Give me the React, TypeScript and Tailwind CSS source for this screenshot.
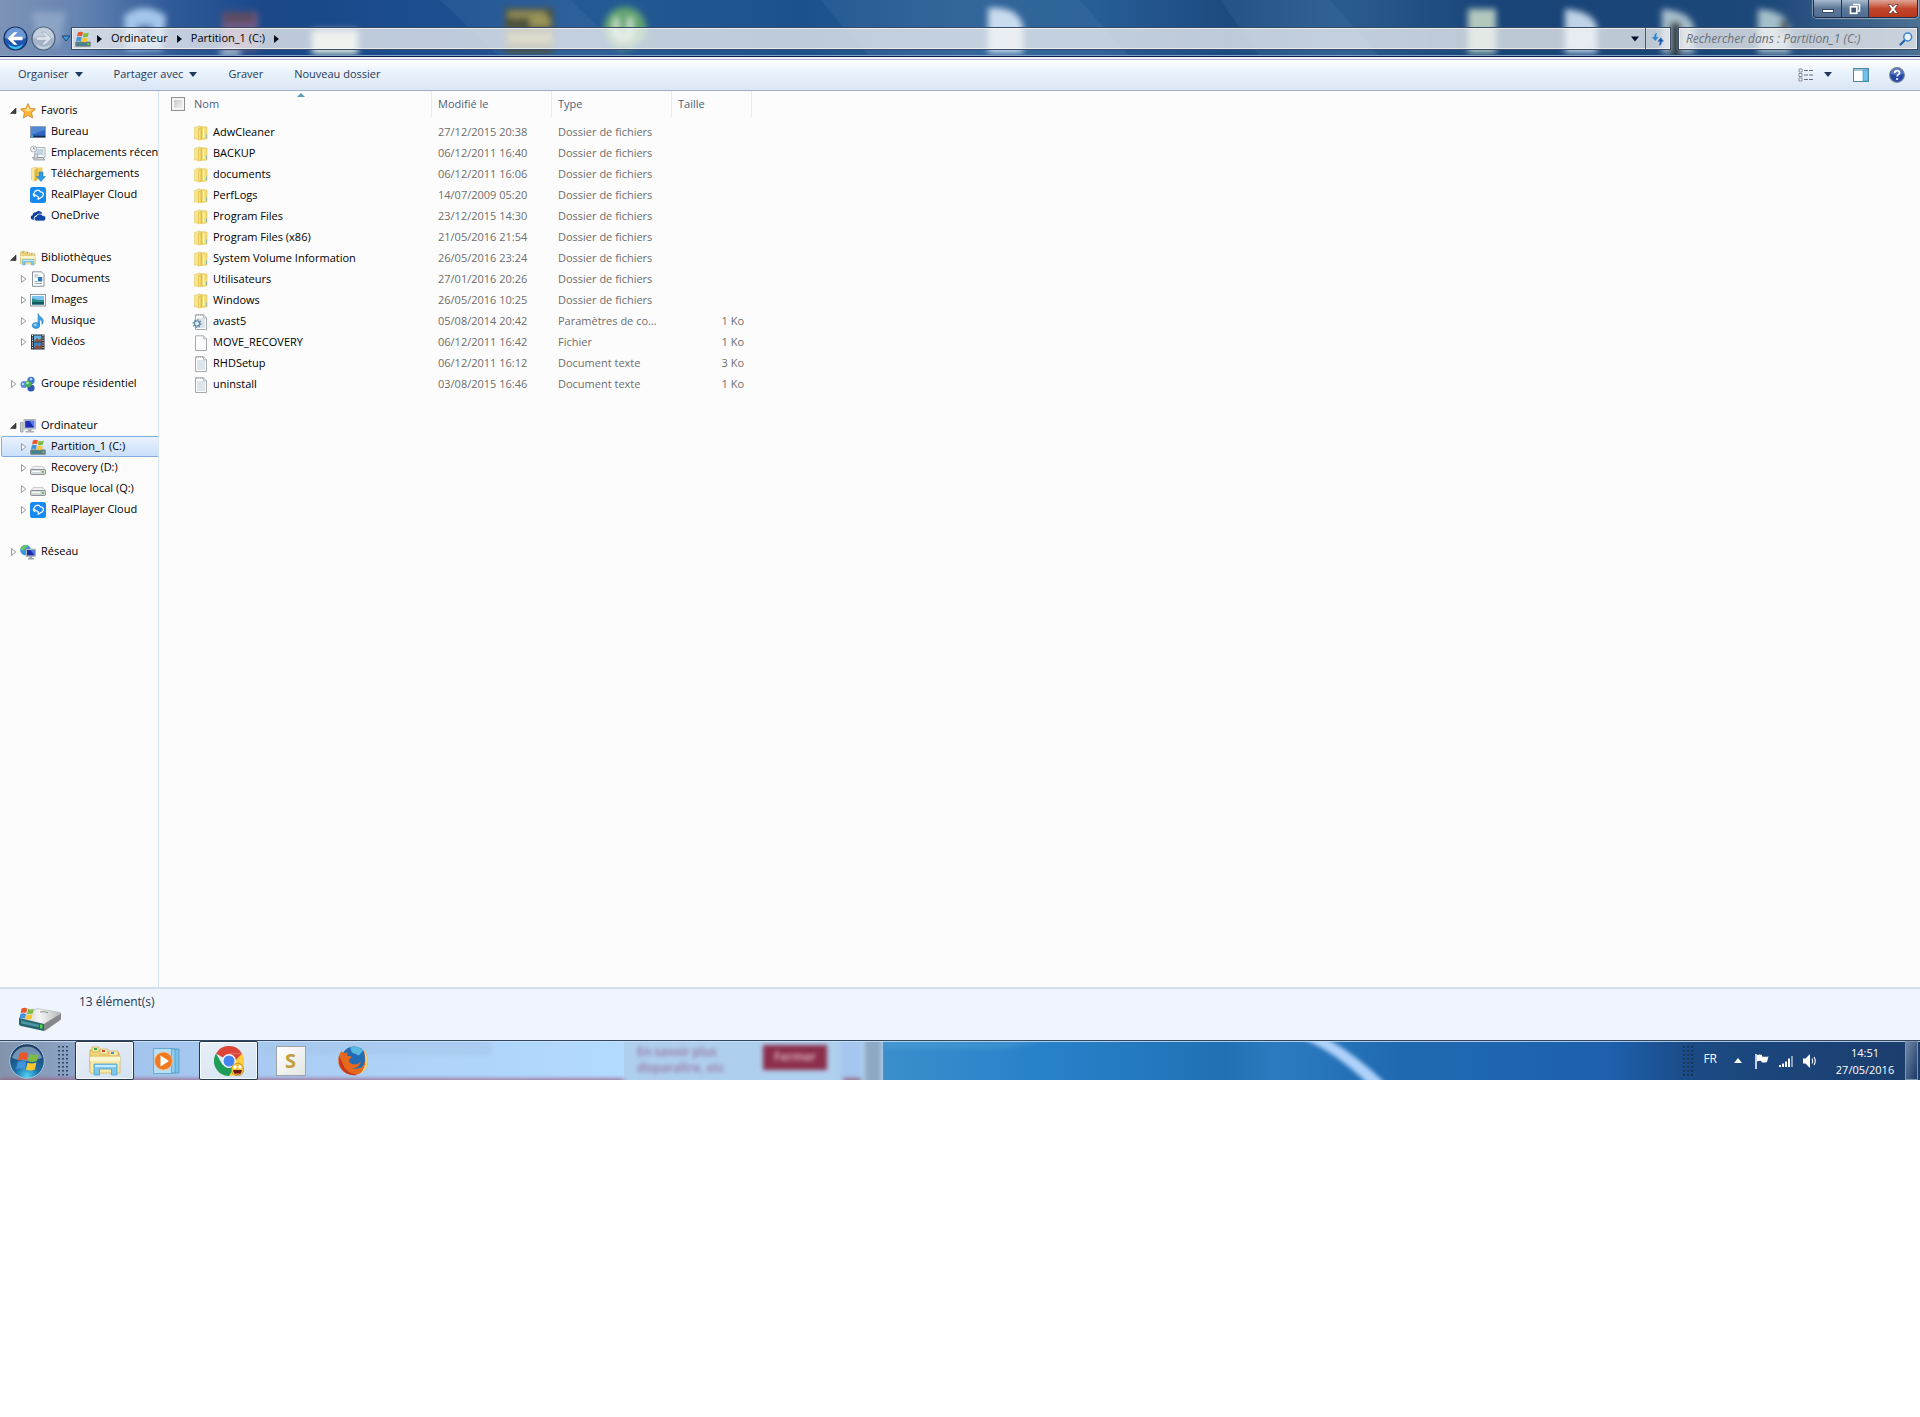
import type { ReactNode } from "react";

type IconProps = { className?: string };

function FolderIcon() {
  return (
    <svg viewBox="0 0 14 16" className="h-4 w-3.5 shrink-0">
      <path d="M.5 2.500 6 .8V14.500L.5 14z" fill="#f6e48e" stroke="#dcc35a" strokeWidth=".5" />
      <path d="M6.500 1.500 13 2V14l-6.500.5z" fill="#f3dc74" stroke="#d8bc4e" strokeWidth=".5" />
      <path d="M4.300 3.600 8 2.200V14L4.300 15.600z" fill="#e2bc3c" />
      <path d="M5 4 6.600 3.300V14.300L5 15z" fill="#f5e08a" />
      <path d="M9 3.400h1.400V13H9z" fill="#fbf0b6" />
      <path d="M12 9.500h1V13h-1z" fill="#8fb7a8" />
    </svg>
  );
}

function PageIcon({ lined, gear }: { lined?: boolean; gear?: boolean }) {
  return (
    <svg viewBox="0 0 16 16" className="-ml-0.5 h-4 w-4 shrink-0">
      <path d="M3.500.8h8l3 3v11.700h-11z" fill="#fdfdfd" stroke="#9a9fa5" strokeWidth=".9" />
      <path d="M11.500.8v3h3" fill="#e6e9ec" stroke="#9a9fa5" strokeWidth=".7" />
      {lined && <path d="M5 5h8M5 7h8M5 9h8M5 11h8M5 13h8" stroke="#b3c6d4" strokeWidth=".9" />}
      {lined && <path d="M4 1h7" stroke="#8b9298" strokeWidth="1.200" strokeDasharray="1 1" />}
      {gear && (
        <g>
          <circle cx="5" cy="9.500" r="3.900" fill="none" stroke="#7396aa" strokeWidth="1.400" strokeDasharray="1.500 1.500" />
          <circle cx="5" cy="9.500" r="2.600" fill="#e6f1f7" stroke="#5f8ba5" strokeWidth="1.400" />
        </g>
      )}
    </svg>
  );
}

function WindowsFlag() {
  return (
    <g>
      <path d="M1.200 1.600C3 .6 4.300.8 5.600 1.500L4.800 5C3.600 4.400 2.200 4.300.5 5.100z" fill="#e8562a" />
      <path d="M6.200 1.800c1.500.7 3 .6 4.500-.1L9.900 5.200c-1.500.7-3 .7-4.400.1z" fill="#7fbb42" />
      <path d="M.3 5.800c1.700-.8 3-.6 4.300 0L3.800 9.300C2.600 8.700 1.200 8.700-.4 9.400z" fill="#3f93dc" />
      <path d="M5.300 6.100c1.500.6 3 .5 4.400-.1L8.900 9.500c-1.500.7-3 .6-4.400 0z" fill="#fbc72e" />
    </g>
  );
}

function SystemDriveIcon({ className = "h-4 w-4 shrink-0" }: IconProps) {
  return (
    <svg viewBox="0 0 16 16" className={className}>
      <path d="M3.500 8h9.500l2.500 3.500H1z" fill="#d6dadd" />
      <rect x=".4" y="10.800" width="15.200" height="4.700" rx=".8" fill="#5d7c80" stroke="#868c90" strokeWidth=".6" />
      <rect x="2" y="12" width="9" height="2.200" fill="#3c8791" />
      <rect x="12.500" y="12" width="1.600" height="2" fill="#63cf4c" />
      <g transform="translate(1.500 -.4) scale(1.150)"><WindowsFlag /></g>
    </svg>
  );
}

function DriveIcon() {
  return (
    <svg viewBox="0 0 16 16" className="h-4 w-4 shrink-0">
      <path d="M3 6.500h10l2.500 3.500H.5z" fill="#eceeef" stroke="#b0b4b7" strokeWidth=".6" />
      <rect x=".5" y="9.500" width="15" height="5" rx="1.200" fill="#d3d6d8" stroke="#777c80" strokeWidth=".8" />
      <rect x="2" y="10.800" width="8" height="1.200" fill="#f7f8f8" />
      <rect x="12" y="11" width="1.600" height="1.800" fill="#57a644" />
    </svg>
  );
}

function StarIcon() {
  return (
    <svg viewBox="0 0 16 16" className="h-4 w-4 shrink-0">
      <path d="M8 .6 10.200 5.400l5.300.6-3.900 3.600 1 5.300L8 12.300l-4.600 2.600 1-5.300L.5 6l5.300-.6z" fill="#fbb638" stroke="#d9791c" strokeWidth=".8" strokeLinejoin="round" />
      <path d="M8 2.500 9.400 6.200 13 6.800 8 8.500 3.500 6.800l3-.6z" fill="#fde597" />
    </svg>
  );
}

function DesktopIcon() {
  return (
    <svg viewBox="0 0 16 16" className="h-4 w-4 shrink-0">
      <rect x=".5" y="2.500" width="15" height="11" fill="#2e66c0" stroke="#8d9cad" strokeWidth=".8" />
      <path d="M1 3h14v3L1 11z" fill="#5f97dd" opacity=".7" />
      <rect x=".8" y="11.700" width="14.400" height="1.600" fill="#1a2c4d" />
      <circle cx="2" cy="12.300" r="1.300" fill="#48b0e0" />
    </svg>
  );
}

function RecentIcon() {
  return (
    <svg viewBox="0 0 16 16" className="h-4 w-4 shrink-0">
      <path d="M5 2.500h10v10H5z" fill="#f2f4f5" stroke="#8f989e" strokeWidth=".7" />
      <path d="M6.500 5h7M6.500 7h7M6.500 9h7" stroke="#7aa7c4" strokeWidth=".8" />
      <path d="M2.500 12.500h10l2.500 2.500h-11z" fill="#cfd5d8" stroke="#848c91" strokeWidth=".7" />
      <path d="M4.500 9h3v4h-3z" fill="#dde4e8" stroke="#7d8b94" strokeWidth=".6" />
      <circle cx="3.600" cy="4" r="3" fill="#f7f9fa" stroke="#93a1aa" strokeWidth=".8" />
      <path d="M3.600 2.200V4H5" fill="none" stroke="#4a6a80" strokeWidth=".7" />
    </svg>
  );
}

function DownloadsIcon() {
  return (
    <svg viewBox="0 0 16 16" className="h-4 w-4 shrink-0">
      <path d="M1.500 2.500 6 1v13.500l-4.500-.6z" fill="#f8e8a0" stroke="#d9bd5c" strokeWidth=".5" />
      <path d="M6 1.500h6.500V13H6z" fill="#f0cf62" />
      <path d="M4.500 3.800 7.500 2.500V14l-3 1.500z" fill="#dfb437" />
      <path d="M9 6h4v4.500h2.500L11 15.500 6.500 10.500H9z" fill="#2f9be2" stroke="#1c74b8" strokeWidth=".5" />
    </svg>
  );
}

function RealPlayerIcon() {
  return (
    <svg viewBox="0 0 16 16" className="h-4 w-4 shrink-0">
      <rect width="16" height="16" rx="2.500" fill="#168af0" />
      <path d="M4.800 9.500A2 2 0 0 1 4.200 6 3.400 3.400 0 0 1 10.400 4.800 2.800 2.800 0 0 1 12.300 9.800L8.200 12.300V9.800L4.500 7.800" fill="none" stroke="#fff" strokeWidth="1.300" strokeLinejoin="round" strokeLinecap="round" />
    </svg>
  );
}

function OneDriveIcon() {
  return (
    <svg viewBox="0 0 16 16" className="h-4 w-4 shrink-0">
      <path d="M3.800 11.800H2.600A2.300 2.300 0 0 1 2.500 7.300 3.600 3.600 0 0 1 6 4.300 4 4 0 0 1 12.500 5.500L8 6.200 4.500 8.500z" fill="#0d3f9a" />
      <path d="M6.500 13a2.300 2.300 0 0 1-.2-4.600A3.400 3.400 0 0 1 12.500 7.500 2.800 2.800 0 0 1 13.600 13z" fill="#0f47a8" stroke="#fcfcfc" strokeWidth=".7" />
    </svg>
  );
}

function LibrariesIcon({ className = "h-4 w-4 shrink-0" }: IconProps) {
  return (
    <svg viewBox="0 0 32 30" className={className}>
      <path d="M1 4h9l2 3h18v19H1z" fill="#f3d878" stroke="#c9a649" strokeWidth=".8" />
      <path d="M3 1h7v5H3z" fill="#f7e49a" stroke="#c9a649" strokeWidth=".6" />
      <path d="M5 2h3v2H5z" fill="#39a845" />
      <path d="M11 3h8v5h-8z" fill="#f9e8a8" stroke="#c9a649" strokeWidth=".6" />
      <path d="M13 4h3v2h-3z" fill="#cf4a36" />
      <path d="M20 5h9v5h-9z" fill="#f9e8a8" stroke="#c9a649" strokeWidth=".6" />
      <path d="M22 6h3v2h-3z" fill="#3f8fd8" />
      <path d="M1 10h30v17H1z" fill="#f8e9a7" stroke="#d4b65c" strokeWidth=".8" />
      <path d="M1 11h30v4H1z" fill="#fcf5cf" />
      <path d="M5 18h23v11h-5.500v-6h-12v6H5z" fill="#7cc6ec" stroke="#4a9fd0" strokeWidth=".8" />
      <path d="M6 19h21v2H6z" fill="#cbeafa" />
    </svg>
  );
}

function DocumentsIcon() {
  return (
    <svg viewBox="0 0 16 16" className="h-4 w-4 shrink-0">
      <path d="M2.500.8h9l2.500 2.500v12h-11.500z" fill="#fcfdfd" stroke="#7d8790" strokeWidth=".9" />
      <path d="M4.500 4h4M4.500 6h3M4.500 12.500h7.500M4.500 10.500h3" stroke="#8fa2b3" strokeWidth=".9" />
      <rect x="8" y="6" width="4.200" height="4.500" fill="#2b76b8" />
    </svg>
  );
}

function PicturesIcon() {
  return (
    <svg viewBox="0 0 16 16" className="h-4 w-4 shrink-0">
      <rect x=".5" y="2.500" width="15" height="11.500" fill="#fbfbfb" stroke="#868e94" strokeWidth=".9" />
      <rect x="2" y="4" width="12" height="8.500" fill="#7cc4ee" />
      <path d="M2 6.500c4 .5 5 2 12 1.500v4.500H2z" fill="#2a8f87" />
      <path d="M2 10h12v2.500H2z" fill="#165a66" />
    </svg>
  );
}

function MusicIcon() {
  return (
    <svg viewBox="0 0 16 16" className="h-4 w-4 shrink-0">
      <path d="M8 .5c.5 3 5.500 3.500 5.300 8-.1 1.500-.8 2.500-1.500 3 .8-3-.8-4.500-2.300-5v6H8z" fill="#3fa3e3" stroke="#1d79bd" strokeWidth=".5" />
      <ellipse cx="6" cy="12.500" rx="3.700" ry="2.900" fill="#3da5e8" stroke="#1a6db0" strokeWidth=".6" />
      <ellipse cx="5.200" cy="11.700" rx="1.500" ry="1" fill="#a9dcf8" />
    </svg>
  );
}

function VideosIcon() {
  return (
    <svg viewBox="0 0 16 16" className="h-4 w-4 shrink-0">
      <rect x="1" y=".5" width="13.500" height="15" fill="#232a30" />
      <rect x="4" y="1.500" width="7.500" height="6" fill="#5fb0e6" />
      <rect x="4" y="8.500" width="7.500" height="6" fill="#3c88c6" />
      <path d="M4 7.500 7 4l2 2 2.500-2v3.500zM4 14.500l3-4 2 2 2.500-2v4z" fill="#9a4b32" />
      <path d="M2.500 1v14M13 1v14" stroke="#e4e8ea" strokeWidth="1.200" strokeDasharray="1.200 1.200" />
    </svg>
  );
}

function HomegroupIcon() {
  return (
    <svg viewBox="0 0 16 16" className="h-4 w-4 shrink-0">
      <circle cx="4" cy="8.500" r="3.500" fill="#5a8fd6" />
      <circle cx="11" cy="4.500" r="3.700" fill="#4079cc" />
      <circle cx="11" cy="12" r="3.600" fill="#2e58b4" />
      <circle cx="8.200" cy="8" r="3.300" fill="#45ac55" />
      <circle cx="7.500" cy="7" r="1.300" fill="#b5e6b2" />
      <circle cx="11" cy="3.300" r="1.200" fill="#bcd7f6" />
      <circle cx="3" cy="8" r="1" fill="#d3e5f9" />
    </svg>
  );
}

function ComputerIcon() {
  return (
    <svg viewBox="0 0 16 16" className="h-4 w-4 shrink-0">
      <path d="M.5 4.500H3V14H.5z" fill="#c9cfd2" stroke="#7b8388" strokeWidth=".6" />
      <rect x="4" y="1.500" width="11.500" height="9.500" fill="#d7dbde" stroke="#8b9297" strokeWidth=".6" />
      <rect x="5.200" y="2.700" width="9" height="7" fill="#1c2fb4" />
      <path d="M9.500 2.700h4.700v7z" fill="#5c7df0" />
      <path d="M8 11h3.500v2H14v1.500H5.500V13H8z" fill="#aab0b4" />
    </svg>
  );
}

function NetworkIcon() {
  return (
    <svg viewBox="0 0 16 16" className="h-4 w-4 shrink-0">
      <circle cx="5.500" cy="6" r="5.300" fill="#3a95dd" />
      <path d="M2 2.500C5 0 7 1 7.500 2 6 4 5 3.500 4.500 6 3.500 7 1.500 6 .5 5z" fill="#69c562" />
      <rect x="6" y="5" width="9.500" height="7.500" fill="#c8cdd1" stroke="#7f878d" strokeWidth=".5" />
      <rect x="7" y="6" width="7.500" height="5.500" fill="#1a2db0" />
      <path d="M10.500 6h4v5.500z" fill="#4f74ea" />
      <path d="M9.500 12.500h2.500V14H14v1.500H8V14h1.500z" fill="#9ba2a7" />
    </svg>
  );
}

type TreeItem = { label: string; icon: ReactNode; selected?: boolean };
type TreeGroup = TreeItem & { open?: boolean; leaf?: boolean; items: TreeItem[] };

const groups: TreeGroup[] = [
  {
    label: "Favoris",
    icon: <StarIcon />,
    open: true,
    leaf: true,
    items: [
      { label: "Bureau", icon: <DesktopIcon /> },
      { label: "Emplacements récents", icon: <RecentIcon /> },
      { label: "Téléchargements", icon: <DownloadsIcon /> },
      { label: "RealPlayer Cloud", icon: <RealPlayerIcon /> },
      { label: "OneDrive", icon: <OneDriveIcon /> },
    ],
  },
  {
    label: "Bibliothèques",
    icon: <LibrariesIcon />,
    open: true,
    items: [
      { label: "Documents", icon: <DocumentsIcon /> },
      { label: "Images", icon: <PicturesIcon /> },
      { label: "Musique", icon: <MusicIcon /> },
      { label: "Vidéos", icon: <VideosIcon /> },
    ],
  },
  { label: "Groupe résidentiel", icon: <HomegroupIcon />, items: [] },
  {
    label: "Ordinateur",
    icon: <ComputerIcon />,
    open: true,
    items: [
      { label: "Partition_1 (C:)", icon: <SystemDriveIcon />, selected: true },
      { label: "Recovery (D:)", icon: <DriveIcon /> },
      { label: "Disque local (Q:)", icon: <DriveIcon /> },
      { label: "RealPlayer Cloud", icon: <RealPlayerIcon /> },
    ],
  },
  { label: "Réseau", icon: <NetworkIcon />, items: [] },
];

const files = [
  { name: "AdwCleaner", date: "27/12/2015 20:38", type: "Dossier de fichiers", size: "", kind: "folder" },
  { name: "BACKUP", date: "06/12/2011 16:40", type: "Dossier de fichiers", size: "", kind: "folder" },
  { name: "documents", date: "06/12/2011 16:06", type: "Dossier de fichiers", size: "", kind: "folder" },
  { name: "PerfLogs", date: "14/07/2009 05:20", type: "Dossier de fichiers", size: "", kind: "folder" },
  { name: "Program Files", date: "23/12/2015 14:30", type: "Dossier de fichiers", size: "", kind: "folder" },
  { name: "Program Files (x86)", date: "21/05/2016 21:54", type: "Dossier de fichiers", size: "", kind: "folder" },
  { name: "System Volume Information", date: "26/05/2016 23:24", type: "Dossier de fichiers", size: "", kind: "folder" },
  { name: "Utilisateurs", date: "27/01/2016 20:26", type: "Dossier de fichiers", size: "", kind: "folder" },
  { name: "Windows", date: "26/05/2016 10:25", type: "Dossier de fichiers", size: "", kind: "folder" },
  { name: "avast5", date: "05/08/2014 20:42", type: "Paramètres de co...", size: "1 Ko", kind: "config" },
  { name: "MOVE_RECOVERY", date: "06/12/2011 16:42", type: "Fichier", size: "1 Ko", kind: "blank" },
  { name: "RHDSetup", date: "06/12/2011 16:12", type: "Document texte", size: "3 Ko", kind: "text" },
  { name: "uninstall", date: "03/08/2015 16:46", type: "Document texte", size: "1 Ko", kind: "text" },
];

// Desktop seen through the glass title bar
function TitleWallpaper() {
  return (
    <svg viewBox="0 0 1920 56" preserveAspectRatio="none" className="absolute inset-0 h-full w-full">
      <defs>
        <linearGradient id="title-sky">
          <stop offset="0" stopColor="#7d93b6" />
          <stop offset=".04" stopColor="#6685b2" />
          <stop offset=".09" stopColor="#2f5a98" />
          <stop offset=".14" stopColor="#194788" />
          <stop offset=".24" stopColor="#1d4f90" />
          <stop offset=".3" stopColor="#265a94" />
          <stop offset=".42" stopColor="#1d518b" />
          <stop offset=".5" stopColor="#2c6096" />
          <stop offset=".57" stopColor="#285d95" />
          <stop offset=".64" stopColor="#1b4a80" />
          <stop offset=".7" stopColor="#2a5b90" />
          <stop offset=".78" stopColor="#184478" />
          <stop offset=".92" stopColor="#1c4779" />
          <stop offset="1" stopColor="#4d7093" />
        </linearGradient>
        <filter id="title-blur" x="-20%" y="-20%" width="140%" height="140%">
          <feGaussianBlur stdDeviation="3" />
        </filter>
      </defs>
      <rect width="1920" height="56" fill="url(#title-sky)" />
      <path d="M440 0h130l60 57H500zM820 0h260l50 57H870zM1220 0h110l50 57h-120z" fill="#5b8cbd" opacity=".15" />
      <g filter="url(#title-blur)">
        <path d="M32 12h34l-6 34H38z" fill="#9fb6d2" opacity=".6" />
        <path d="M124 16q20-16 42 0l-4 34h-36z" fill="#a5c6ea" />
        <path d="M137 25h16v11h-16z" fill="#3c6db0" />
        <path d="M222 12h36v38h-36z" fill="#6f5a86" />
        <path d="M224 13h30v9h-30z" fill="#5c4a58" />
        <path d="M220 50h20v6h-20z" fill="#a9c3dc" />
        <path d="M312 30h46v24h-46z" fill="#dce9dd" />
        <path d="M505 8h48v45h-48z" fill="#4d523c" />
        <path d="M508 12h38v5h-38zM530 18h20v8h-20zM508 34h44v8h-44z" fill="#a29a5c" />
        <circle cx="625" cy="28" r="21" fill="#63a56f" />
        <path d="M616 18v16q8 8 14 0V18" fill="none" stroke="#d5ead8" strokeWidth="5" />
        <path d="M988 8q30-2 35 18v27h-35z" fill="#c9dcef" />
        <path d="M1468 9h28v44h-28z" fill="#b3c8bd" />
        <path d="M1565 9q28 2 32 18v26h-32z" fill="#bfd3e6" />
        <path d="M1662 9q28 2 32 18v26h-32z" fill="#a9c0cc" />
        <path d="M1670 22h11v34h-11z" fill="#2f3639" />
        <path d="M1758 9q28 2 32 18v26h-32z" fill="#a6c0cb" />
        <path d="M1780 20h8v14h-8z" fill="#44525c" />
      </g>
      <rect y="55" width="1920" height="1" fill="#86a5c5" />
    </svg>
  );
}

function TaskbarWallpaper() {
  return (
    <svg viewBox="0 0 1920 39" preserveAspectRatio="none" className="absolute inset-0 h-full w-full">
      <defs>
        <linearGradient id="task-left">
          <stop offset="0" stopColor="#8293ac" />
          <stop offset=".12" stopColor="#8ba4c6" />
          <stop offset=".22" stopColor="#a3c4ec" />
          <stop offset=".6" stopColor="#aed1f8" />
          <stop offset="1" stopColor="#b3daff" />
        </linearGradient>
        <linearGradient id="task-right">
          <stop offset="0" stopColor="#3a8ecc" />
          <stop offset=".16" stopColor="#2781c9" />
          <stop offset=".33" stopColor="#2071b4" />
          <stop offset=".38" stopColor="#2c7bc0" />
          <stop offset=".5" stopColor="#1f69b0" />
          <stop offset=".7" stopColor="#1d60ad" />
          <stop offset=".78" stopColor="#1b4a84" />
          <stop offset="1" stopColor="#1b3d6c" />
        </linearGradient>
        <filter id="task-blur" x="-20%" y="-40%" width="140%" height="180%">
          <feGaussianBlur stdDeviation="2" />
        </filter>
      </defs>
      <rect width="625" height="39" fill="url(#task-left)" />
      <rect x="624" width="260" height="39" fill="#afcfee" />
      <rect x="883" width="1037" height="39" fill="url(#task-right)" />
      <g filter="url(#task-blur)">
        <rect x="260" y="-4" width="232" height="18" fill="#a5c6ea" opacity=".6" />
        <rect x="841" y="-4" width="20" height="50" fill="#a4c6ef" />
        <rect x="865" y="-4" width="16" height="50" fill="#8ea9c4" />
        <rect x="763" y="4" width="64" height="25" fill="#8b2e4c" />
        <rect x="0" y="38" width="624" height="4" fill="#9a5878" />
        <rect x="843" y="37" width="18" height="4" fill="#94405f" />
        <path d="M1302-3h24q32 18 60 46h-18q-30-30-66-46z" fill="#aed2fa" />
        <path d="M883 0h160l-40 8H883z" fill="#5eacdc" opacity=".3" />
      </g>
      <g filter="url(#task-blur)" fontFamily="Open Sans, sans-serif" fontWeight="600" fontSize="12" fill="#94709c">
        <text x="637" y="15">En savoir plus</text>
        <text x="637" y="31">disparaître, etc</text>
        <text x="774" y="20" fill="#e0bccb">Fermer</text>
      </g>
      <rect width="1920" height="1" fill="#cfe4f5" opacity=".8" />
    </svg>
  );
}

function Caret({ className = "h-1.5 w-2" }: IconProps) {
  return (
    <svg viewBox="0 0 8 5" className={className}>
      <path d="M0 0h8L4 5z" fill="currentColor" />
    </svg>
  );
}

function Chevron() {
  return (
    <svg viewBox="0 0 5 8" className="h-2 w-[5px]">
      <path d="M0 0v8l5-4z" fill="#0b0f1a" />
    </svg>
  );
}

function NavButton({ back }: { back?: boolean }) {
  return (
    <button aria-label={back ? "Précédent" : "Suivant"} className="h-[25px] w-[25px]">
      <svg viewBox="0 0 25 25" className="h-full w-full">
        <circle cx="12.500" cy="12.500" r="11.500" fill={back ? "#1d56ae" : "#a4b3c7"} stroke={back ? "#16305c" : "#4c5f7a"} strokeWidth="1.200" />
        <path d="M2 12a10.500 10.500 0 0 1 21 0q-10 4-21 0z" fill={back ? "#7fa9de" : "#ccd6e2"} opacity=".8" />
        <path d="M5 18q7.500 6 15 0-2 5-7.500 5.300Q7 23 5 18z" fill={back ? "#38c1f4" : "#c6d1df"} />
        {back ? (
          <path d="M4.500 12.500 11 6.200h3.500l-4.300 4.500h9.300v3.600h-9.300l4.300 4.500H11z" fill="#fff" />
        ) : (
          <path d="M20.500 12.500 14 6.200h-3.500l4.300 4.500H5.500v3.600h9.300l-4.300 4.500H14z" fill="#dde4ec" stroke="#94a4b8" strokeWidth=".6" />
        )}
      </svg>
    </button>
  );
}

function TitleBar() {
  return (
    <header className="relative h-[57px] overflow-hidden border-b border-[#101f45]">
      <TitleWallpaper />
      <div className="relative flex justify-end pr-0.5">
        <div className="flex h-[18px] overflow-hidden rounded-b border border-t-0 border-[#1d2c44] shadow-[0_0_1px_1px_rgba(255,255,255,0.45)]">
          <button aria-label="Réduire" className="flex w-7 items-end justify-center border-r border-[#22344f] bg-linear-to-b from-[#a9bacd] via-[#5d7899] to-[#506d92] pb-1">
            <span className="h-1 w-3 border border-[#39485e] bg-white" />
          </button>
          <button aria-label="Niveau inférieur" className="flex w-[27px] items-center justify-center border-r border-[#22344f] bg-linear-to-b from-[#a9bacd] via-[#5d7899] to-[#506d92]">
            <svg viewBox="0 0 12 12" className="h-3 w-3">
              <path d="M4 1.500h6.500V8H8.500" fill="none" stroke="#fff" strokeWidth="1.500" />
              <rect x="1.500" y="3.800" width="6.300" height="6.500" fill="#405673" stroke="#fff" strokeWidth="1.700" />
            </svg>
          </button>
          <button aria-label="Fermer" className="flex w-12 items-center justify-center bg-linear-to-b from-[#dfa596] via-[#c1462b] to-[#b8371a]">
            <svg viewBox="0 0 12 10" className="h-2.5 w-3">
              <path d="M1 .5h3l2 2.500L8 .5h3L7.700 5 11 9.500H8L6 7 4 9.500H1L4.300 5z" fill="#fff" stroke="#5d2d2a" strokeWidth=".7" />
            </svg>
          </button>
        </div>
      </div>
      <div className="relative mt-2 flex items-center pr-0.5 pl-[3px]">
        <div className="flex w-[68px] items-center gap-[3px]">
          <NavButton back />
          <NavButton />
          <button aria-label="Pages récentes" className="pl-0.5 text-[#3fa0dd]">
            <svg viewBox="0 0 10 7" className="h-[7px] w-2.5">
              <path d="M1 1h8L5 6z" fill="#3fa0dd" stroke="#173b6e" strokeWidth=".9" />
            </svg>
          </button>
        </div>
        <div className="flex h-[23px] flex-1 items-center border border-[#3a4c63] bg-[#f4f4f4]/75 pl-[3px] shadow-[inset_0_0_0_1px_rgba(255,255,255,0.6)]">
          <SystemDriveIcon className="h-4 w-4" />
          <div className="flex items-center gap-[9px] pl-[6px] text-black">
            <Chevron />
            <button>Ordinateur</button>
            <Chevron />
            <button>Partition_1 (C:)</button>
            <Chevron />
          </div>
          <button aria-label="Emplacements précédents" className="ml-auto pr-1.5 text-[#050a30]">
            <Caret />
          </button>
          <button aria-label="Actualiser" className="flex h-full w-[25px] items-center justify-center border-l border-[#4a5a70]">
            <svg viewBox="0 0 14 14" className="h-3.5 w-3.5">
              <path d="M6.500 1C4 1 3.200 2.500 3.200 5H1l3.300 4L7.500 5H5.300c0-2 .2-3 1.200-4z" fill="#2f86d0" />
              <path d="M7.500 13.500c2.500 0 3.300-1.500 3.300-4H13L9.700 5.500 6.500 9.500h2.200c0 2-.2 3-1.200 4z" fill="#1b5fb0" />
            </svg>
          </button>
        </div>
        <label className="ml-[7px] flex h-[23px] w-60 items-center border border-[#3a4c63] bg-[#f4f4f4]/75 pr-1 pl-[7px] shadow-[inset_0_0_0_1px_rgba(255,255,255,0.6)]">
          <input
            type="text"
            aria-label="Rechercher"
            placeholder="Rechercher dans : Partition_1 (C:)"
            className="min-w-0 flex-1 bg-transparent text-xs italic outline-none placeholder:text-[#6b7078]"
          />
          <svg viewBox="0 0 14 14" className="h-3.5 w-3.5">
            <path d="M6 8 1.500 12.500" stroke="#1e5fae" strokeWidth="2.200" strokeLinecap="round" />
            <circle cx="8.700" cy="5" r="3.900" fill="#eaf4fc" stroke="#3f83cb" strokeWidth="1.500" />
          </svg>
        </label>
      </div>
    </header>
  );
}

function Toolbar() {
  return (
    <div className="flex h-[34px] items-center border-t-2 border-b border-t-[#f1f1fb] border-b-[#9dafc9] bg-linear-to-b from-white via-[#e9f2fb] via-45% to-[#dae6f4] pr-[15px] pl-[18px] text-[#1e395b] shadow-[inset_0_1px_0_#b3b1cf]">
      <button className="flex items-center gap-1.5">Organiser <Caret className="h-[5px] w-2" /></button>
      <button className="ml-[31px] flex items-center gap-1.5">Partager avec <Caret className="h-[5px] w-2" /></button>
      <button className="ml-[31px]">Graver</button>
      <button className="ml-[31px]">Nouveau dossier</button>
      <button aria-label="Changer l'affichage" className="ml-auto">
        <svg viewBox="0 0 16 14" className="h-3.5 w-4">
          <path d="M1 1h3v3H1zM1 5.500h3v3H1zM1 10h3v3H1z" fill="#fff" stroke="#76828f" strokeWidth=".9" />
          <path d="M6 2.500h4M11 2.500h4M6 7h4M11 7h4M6 11.500h4M11 11.500h4" stroke="#5c7084" strokeWidth="1" />
        </svg>
      </button>
      <button aria-label="Autres options" className="ml-[10px]"><Caret className="h-[5px] w-2" /></button>
      <button aria-label="Volet de visualisation" className="ml-[21px]">
        <svg viewBox="0 0 16 14" className="h-3.5 w-4">
          <rect x=".5" y=".5" width="15" height="13" fill="#fff" stroke="#4d85a6" />
          <path d="M1 1h14v2H1z" fill="#a3c6da" />
          <rect x="10" y="2" width="5" height="11" fill="#6fc3e6" stroke="#4d97bd" strokeWidth=".7" />
        </svg>
      </button>
      <button aria-label="Aide" className="ml-5">
        <svg viewBox="0 0 16 16" className="h-4 w-4">
          <circle cx="8" cy="8" r="7.400" fill="#2549a8" stroke="#7c8695" strokeWidth="1.100" />
          <path d="M2 7a6 6 0 0 1 12 0q-6 2-12 0z" fill="#7f9be0" opacity=".6" />
          <path d="M5.600 6q.2-2.400 2.500-2.400 2.400 0 2.400 2.100 0 1.300-1.300 2-1 .6-1 1.700" fill="none" stroke="#fff" strokeWidth="1.700" />
          <circle cx="8.100" cy="12" r="1.100" fill="#fff" />
        </svg>
      </button>
    </div>
  );
}

function Expander({ open }: { open?: boolean }) {
  return (
    <svg viewBox="0 0 7 8" className="h-2 w-[7px] shrink-0">
      {open ? (
        <path d="M6 1v5.500H.5z" fill="#404040" stroke="#262626" strokeWidth=".6" />
      ) : (
        <path d="M1.500.6v6.800L5.800 4z" fill="#fff" stroke="#8c8c8c" strokeWidth=".9" />
      )}
    </svg>
  );
}

function Sidebar() {
  return (
    <nav aria-label="Volet de navigation" className="w-[159px] shrink-0 overflow-hidden border-r border-[#d6e5f5] pt-[9px] text-black">
      {groups.map((group) => (
        <section key={group.label} className="mb-[21px]">
          <button className="flex h-[21px] w-full items-center gap-[5px] pl-[10px] whitespace-nowrap">
            <span className="flex items-center gap-[3px]">
              <Expander open={group.open} />
              {group.icon}
            </span>
            {group.label}
          </button>
          {group.items.map((item) => (
            <button
              key={item.label}
              className={
                item.selected
                  ? "ml-px flex h-[21px] w-full items-center gap-[5px] rounded-l-xs border border-[#84acdd] bg-linear-to-b from-[#eaf2fc] to-[#c9dffa] pl-[18px] whitespace-nowrap"
                  : "flex h-[21px] w-full items-center gap-[5px] pl-5 whitespace-nowrap"
              }
            >
              <span className="flex items-center gap-[3px]">
                {group.leaf ? <span className="w-[7px]" /> : <Expander />}
                {item.icon}
              </span>
              {item.label}
            </button>
          ))}
        </section>
      ))}
    </nav>
  );
}

function FileIcon({ kind }: { kind: string }) {
  if (kind === "folder") return <FolderIcon />;
  return <PageIcon lined={kind !== "blank"} gear={kind === "config"} />;
}

function FileTable() {
  return (
    <table className="w-[593px] table-fixed border-collapse self-start text-left text-[#6d6d6d]">
      <colgroup>
        <col className="w-[273px]" />
        <col className="w-[120px]" />
        <col className="w-[120px]" />
        <col className="w-[80px]" />
      </colgroup>
      <thead className="text-[#4c607a]">
        <tr className="h-[31px] align-top">
          <th className="p-0 font-normal">
            <div className="relative flex h-[26px] items-center border-r border-[#e6ebf3] pl-3">
              <input
                type="checkbox"
                aria-label="Tout sélectionner"
                className="mr-[9px] h-3.5 w-3.5 appearance-none border border-[#8e8f8f] bg-linear-to-br from-[#b9bdc3] to-[#fbfbfb] shadow-[inset_0_0_0_2px_#f4f4f4]"
              />
              Nom
              <svg viewBox="0 0 8 4" className="absolute top-0.5 left-[138px] h-1 w-2">
                <path d="M0 4h8L4 0z" fill="#5f9bbd" />
              </svg>
            </div>
          </th>
          <th className="p-0 font-normal">
            <div className="flex h-[26px] items-center border-r border-[#e6ebf3] pl-1.5">Modifié le</div>
          </th>
          <th className="p-0 font-normal">
            <div className="flex h-[26px] items-center border-r border-[#e6ebf3] pl-1.5">Type</div>
          </th>
          <th className="p-0 font-normal">
            <div className="flex h-[26px] items-center border-r border-[#e6ebf3] pl-1.5">Taille</div>
          </th>
        </tr>
      </thead>
      <tbody>
        {files.map((file) => (
          <tr key={file.name} className="h-[21px]">
            <td className="p-0 text-black">
              <div className="flex items-center gap-[5px] pl-[35px] whitespace-nowrap">
                <FileIcon kind={file.kind} />
                {file.name}
              </div>
            </td>
            <td className="p-0 pl-1.5 whitespace-nowrap">{file.date}</td>
            <td className="p-0 pl-1.5 whitespace-nowrap">{file.type}</td>
            <td className="p-0 pr-2 text-right whitespace-nowrap">{file.size}</td>
          </tr>
        ))}
      </tbody>
    </table>
  );
}

function StatusBar() {
  return (
    <footer className="flex h-[53px] border-t-2 border-[#d3dfee] bg-[#f0f4fc] pl-[18px] text-xs text-[#1e395b]">
      <svg viewBox="0 0 44 26" className="mt-[17px] h-[26px] w-11">
        <defs>
          <linearGradient id="drive-top" x2="1">
            <stop offset="0" stopColor="#c3c7c9" />
            <stop offset=".5" stopColor="#f4f5f5" />
            <stop offset="1" stopColor="#b5b8ba" />
          </linearGradient>
        </defs>
        <path d="M1 12 18 3q1-.6 2.500-.3L42 6.500q1.500.5.5 1.500L26 18.500z" fill="url(#drive-top)" stroke="#a9acae" strokeWidth=".6" />
        <path d="M1 12l25 6v7L3 20q-2-.5-2-2z" fill="#27646e" />
        <path d="M3 14.500l18 4.300v2.500L3 17.500z" fill="#4c97a3" />
        <path d="M26 18 43 7.500v5q0 1-1 1.700L27.500 24.500q-.7.5-1.500.4z" fill="#85898b" />
        <path d="M22 6q5-1 8 .8" fill="none" stroke="#6e7274" strokeWidth=".8" />
        <rect x="22" y="18.500" width="2.500" height="4" fill="#51d43c" />
        <g transform="translate(2 .5) scale(1.300)"><WindowsFlag /></g>
      </svg>
      <span className="mt-[5px] ml-[17px]">13 élément(s)</span>
    </footer>
  );
}

function Grip() {
  return (
    <svg viewBox="0 0 10 30" className="h-[30px] w-2.5">
      <path d="M1 0v30M5 0v30M9 0v30" stroke="#17283f" strokeWidth="1.500" strokeDasharray="1.500 2.500" />
    </svg>
  );
}

function StartOrb() {
  return (
    <svg viewBox="0 0 36 36" className="h-9 w-9">
      <defs>
        <radialGradient id="orb" cx=".5" cy=".95" r=".9">
          <stop offset="0" stopColor="#4fd3f5" />
          <stop offset=".4" stopColor="#1c6fa6" />
          <stop offset="1" stopColor="#1c3d66" />
        </radialGradient>
      </defs>
      <circle cx="18" cy="18" r="17.300" fill="url(#orb)" stroke="#a9c6dd" strokeWidth="1" />
      <path d="M3 15a15.500 15.500 0 0 1 30 0q-15 6-30 0z" fill="#d9e8f4" opacity=".45" />
      <g transform="translate(8 7.500) scale(2)"><WindowsFlag /></g>
    </svg>
  );
}

function MediaPlayerIcon() {
  return (
    <svg viewBox="0 0 28 26" className="h-[26px] w-7">
      <path d="M6 1h20v24H6z" fill="#7fc0e4" stroke="#4d9ccb" strokeWidth=".8" />
      <path d="M3 1h19v24H3z" fill="#93cdee" stroke="#4d9ccb" strokeWidth=".8" />
      <path d="M.5.500h18v25H.5z" fill="#b8def5" stroke="#5a9fca" strokeWidth=".8" />
      <circle cx="10.500" cy="13" r="9" fill="#ee7a22" stroke="#f9c596" strokeWidth=".8" />
      <path d="M7.500 7.500v11l8.500-5.500z" fill="#fff" />
    </svg>
  );
}

function ChromeIcon() {
  return (
    <svg viewBox="0 0 30 30" className="h-[30px] w-[30px]">
      <path d="M15 15 2 7.500A15 15 0 0 1 28 7.500H15z" fill="#dc4437" />
      <path d="M15 15 28 7.500A15 15 0 0 1 15 30L21.500 18.700z" fill="#fccd3c" />
      <path d="M15 15 21.500 18.700 15 30A15 15 0 0 1 2 7.500l6.500 11.300z" fill="#1e9d59" />
      <path d="M15 7.500H28L21 15H9z" fill="#dc4437" />
      <circle cx="15" cy="15" r="7" fill="#f4f7fb" />
      <circle cx="15" cy="15" r="5.500" fill="#4384f2" />
      <circle cx="23.500" cy="23.500" r="6.300" fill="#f7c336" stroke="#a96f18" strokeWidth=".6" />
      <circle cx="21" cy="21" r="1.700" fill="#fff" />
      <circle cx="26" cy="21" r="1.700" fill="#fff" />
      <path d="M19 24h9q-.8 4.500-4.500 4.500T19 24z" fill="#651a14" />
      <path d="M21 27h5q-2.500 2.500-5 0z" fill="#e2524a" />
    </svg>
  );
}

function FirefoxIcon() {
  return (
    <svg viewBox="0 0 30 30" className="h-[30px] w-[30px]">
      <circle cx="16" cy="13" r="12.500" fill="#246bb5" />
      <path d="M12 1.500q8-2.500 13 3l-4 5-7-3z" fill="#58b8e2" />
      <path d="M25.500 3.500Q30 9 29.800 16A14.800 14.300 0 0 1 .3 16Q0 9 4 4.500q.5 2 1.500 3 2-1.500 5-1-1.500 1.500-1.500 3.200l4.500.8q.3 1.500-2.700 3 .2 4.500 5.700 5 4-.3 6.500-3-1.500 6.500-9 7Q26 24.500 27 14.500q.3-5-1.500-11z" fill="#e5681c" />
      <path d="M25.500 3.500Q30 9 29.800 16q-.8 8-8 12 6-6 5.500-14.500 0-5-1.800-10z" fill="#f8d873" />
      <path d="M1 10Q-.5 22 9 27.500q5 2.500 10 1.500Q7 27 4 16z" fill="#c8371d" />
    </svg>
  );
}

function TaskButton({ label, active, children }: { label: string; active?: boolean; children: ReactNode }) {
  return (
    <button
      aria-label={label}
      className={
        active
          ? "flex h-[39px] w-[59px] items-center justify-center rounded-xs border border-[#27384f] bg-linear-to-br from-[#e9eff6] to-[#d3e2f3] shadow-[inset_0_0_0_1px_rgba(255,255,255,0.8)]"
          : "flex h-[39px] w-[59px] items-center justify-center"
      }
    >
      {children}
    </button>
  );
}

function Taskbar() {
  return (
    <div className="relative flex h-10 items-center overflow-hidden border-t border-[#33475f]">
      <TaskbarWallpaper />
      <div className="relative flex flex-1 items-center">
        <button aria-label="Démarrer" className="ml-[9px]"><StartOrb /></button>
        <span className="ml-[13px]"><Grip /></span>
        <div className="ml-[7px] flex items-center gap-[3px]">
          <TaskButton label="Explorateur Windows" active><LibrariesIcon className="h-[30px] w-8" /></TaskButton>
          <TaskButton label="Lecteur Windows Media"><MediaPlayerIcon /></TaskButton>
          <TaskButton label="Google Chrome" active><ChromeIcon /></TaskButton>
          <TaskButton label="S">
            <span className="flex h-[30px] w-[30px] items-center justify-center border border-[#9ea3a5] bg-linear-to-br from-white to-[#e3e6e2] text-xl font-bold text-[#c1a03c]">S</span>
          </TaskButton>
          <TaskButton label="Mozilla Firefox"><FirefoxIcon /></TaskButton>
        </div>
      </div>
      <div className="relative flex h-full items-center text-white">
        <Grip />
        <button className="ml-[10px] pb-1 text-xs">FR</button>
        <button aria-label="Icônes cachées" className="ml-[17px]">
          <svg viewBox="0 0 8 5" className="h-[5px] w-2"><path d="M0 5h8L4 0z" fill="#fff" /></svg>
        </button>
        <button aria-label="Centre de maintenance" className="ml-3">
          <svg viewBox="0 0 16 16" className="h-4 w-4">
            <path d="M2 1v15" stroke="#fff" strokeWidth="1.500" />
            <path d="M3 2q3-1 5 0v1.500q3 .5 6.500 0L13 9q-3 1-5.500.3V8Q5 7.500 3 8.500z" fill="#fff" />
          </svg>
        </button>
        <button aria-label="Réseau" className="ml-2">
          <svg viewBox="0 0 16 14" className="h-3.5 w-4">
            <path d="M1 11h2v2H1zM4 9.500h2V13H4zM7 7.500h2V13H7zM10 4.500h2V13h-2z" fill="#fff" />
            <path d="M13 2h2v11h-2z" fill="#8ca0b8" />
          </svg>
        </button>
        <button aria-label="Haut-parleurs" className="ml-2">
          <svg viewBox="0 0 16 16" className="h-4 w-4">
            <path d="M1 5.500h2.500L8 1v14l-4.500-4.500H1z" fill="#fff" />
            <path d="M10 5.500q1.500 2.500 0 5M12 4q2.500 4 0 8" fill="none" stroke="#fff" strokeWidth="1.100" />
          </svg>
        </button>
        <div className="ml-4 w-[62px] pt-px text-center leading-[17px] whitespace-nowrap">
          <div>14:51</div>
          <div>27/05/2016</div>
        </div>
        <button aria-label="Afficher le Bureau" className="mr-0.5 ml-[9px] h-full w-[13px] border border-[#7e93b0] bg-linear-to-br from-[#7389a8] to-[#1d3a66]" />
      </div>
    </div>
  );
}

export default function App() {
  return (
    <main className="bg-white font-['Open_Sans','Noto_Sans',sans-serif] text-[11px]">
      <TitleBar />
      <Toolbar />
      <div className="flex min-h-[896px] bg-[#fcfcfc]">
        <Sidebar />
        <FileTable />
      </div>
      <StatusBar />
      <Taskbar />
    </main>
  );
}
